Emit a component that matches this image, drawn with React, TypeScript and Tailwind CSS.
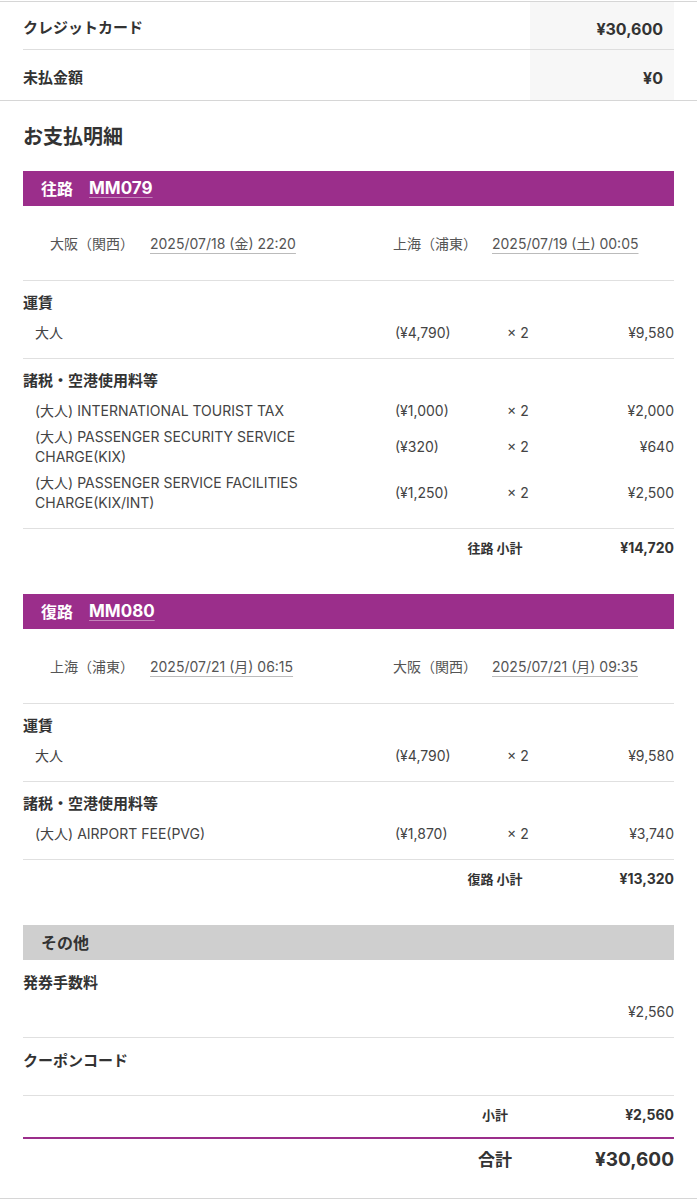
import React from 'react';

type Item = { name: string[]; unit: string; qty: string; amount: string };
type Group = { title: string; items: Item[] };
type Leg = {
  dir: string;
  flight: string;
  from: string;
  fromTime: string;
  to: string;
  toTime: string;
  groups: Group[];
  subtotal: string;
};

const legs: Leg[] = [
  {
    dir: '往路',
    flight: 'MM079',
    from: '大阪（関西）',
    fromTime: '2025/07/18 (金) 22:20',
    to: '上海（浦東）',
    toTime: '2025/07/19 (土) 00:05',
    groups: [
      { title: '運賃', items: [{ name: ['大人'], unit: '(¥4,790)', qty: '× 2', amount: '¥9,580' }] },
      {
        title: '諸税・空港使用料等',
        items: [
          { name: ['(大人) INTERNATIONAL TOURIST TAX'], unit: '(¥1,000)', qty: '× 2', amount: '¥2,000' },
          { name: ['(大人) PASSENGER SECURITY SERVICE', 'CHARGE(KIX)'], unit: '(¥320)', qty: '× 2', amount: '¥640' },
          { name: ['(大人) PASSENGER SERVICE FACILITIES', 'CHARGE(KIX/INT)'], unit: '(¥1,250)', qty: '× 2', amount: '¥2,500' },
        ],
      },
    ],
    subtotal: '¥14,720',
  },
  {
    dir: '復路',
    flight: 'MM080',
    from: '上海（浦東）',
    fromTime: '2025/07/21 (月) 06:15',
    to: '大阪（関西）',
    toTime: '2025/07/21 (月) 09:35',
    groups: [
      { title: '運賃', items: [{ name: ['大人'], unit: '(¥4,790)', qty: '× 2', amount: '¥9,580' }] },
      {
        title: '諸税・空港使用料等',
        items: [{ name: ['(大人) AIRPORT FEE(PVG)'], unit: '(¥1,870)', qty: '× 2', amount: '¥3,740' }],
      },
    ],
    subtotal: '¥13,320',
  },
];

const ItemRow = ({ item }: { item: Item }) => (
  <div className="grid grid-cols-[360px_112px_1fr_1fr] items-center pl-3 text-[14px] leading-[20px] text-[#444]">
    <div>
      {item.name.map((l) => (
        <div key={l}>{l}</div>
      ))}
    </div>
    <div>{item.unit}</div>
    <div>{item.qty}</div>
    <div className="text-right">{item.amount}</div>
  </div>
);

const LegBlock = ({ leg }: { leg: Leg }) => (
  <div className="mb-[28px]">
    <div className="flex h-[35px] items-center bg-[#9b2e8b] pl-[18px] font-bold text-white">
      <span className="text-[16px]">{leg.dir}</span>
      <span className="ml-[16px] text-[17px] underline decoration-white/40 underline-offset-[3px]">{leg.flight}</span>
    </div>

    <div className="flex h-[75px] items-center border-b border-[#e0e0e0] pl-[27px] text-[14px] text-[#555]">
      <div className="flex w-[343px]">
        <span className="w-[100px]">{leg.from}</span>
        <span className="underline decoration-[#bbb] underline-offset-[4px]">{leg.fromTime}</span>
      </div>
      <div className="flex">
        <span className="w-[99px]">{leg.to}</span>
        <span className="underline decoration-[#bbb] underline-offset-[4px]">{leg.toTime}</span>
      </div>
    </div>

    {leg.groups.map((g) => (
      <div key={g.title} className="border-b border-[#e0e0e0] pt-[11px] pb-[15px]">
        <div className="text-[15px] leading-[22px] font-bold text-[#333]">{g.title}</div>
        <div className="mt-[9px] flex flex-col gap-[6px]">
          {g.items.map((it) => (
            <ItemRow key={it.name.join()} item={it} />
          ))}
        </div>
      </div>
    ))}

    <div className="grid grid-cols-[1fr_88px_135px] items-center pt-[9px] pb-[8px] leading-[20px] font-bold text-[#333]">
      <div />
      <div className="text-center text-[13px]">{leg.dir} 小計</div>
      <div className="text-right text-[14px]">{leg.subtotal}</div>
    </div>
  </div>
);

export default function App() {
  return (
    <div className="min-h-[1200px] bg-white font-['Inter','Noto_Sans_CJK_JP',sans-serif] text-[#333]">
      {/* payment summary */}
      <div className="mt-px border-t border-b border-[#d6d6d6] px-[23px]">
        <div className="flex h-[48px] items-stretch border-b border-[#dedede]">
          <div className="flex flex-1 items-center pt-[6px] text-[15px] font-bold">クレジットカード</div>
          <div className="flex w-[144px] items-center justify-end bg-[#f7f7f7] pt-[6px] pr-[11px] text-[16px] font-bold">¥30,600</div>
        </div>
        <div className="flex h-[50px] items-stretch">
          <div className="flex flex-1 items-center pt-[6px] text-[15px] font-bold">未払金額</div>
          <div className="flex w-[144px] items-center justify-end bg-[#f7f7f7] pt-[6px] pr-[11px] text-[16px] font-bold">¥0</div>
        </div>
      </div>

      <div className="border-b border-[#d6d6d6] px-[23px] pt-[22px]">
        <h2 className="mb-[20px] text-[20px] leading-[28px] font-bold text-[#333]">お支払明細</h2>

        {legs.map((leg) => (
          <LegBlock key={leg.flight} leg={leg} />
        ))}

        {/* other */}
        <div className="flex h-[35px] items-center bg-[#cfcfcf] pl-[18px] text-[16px] font-bold text-[#333]">その他</div>

        <div className="border-b border-[#e0e0e0] pt-[12px] pb-[15px]">
          <div className="text-[15px] leading-[22px] font-bold">発券手数料</div>
          <div className="mt-[8px] text-right text-[14px] leading-[20px] text-[#444]">¥2,560</div>
        </div>

        <div className="border-b border-[#e0e0e0] pt-[12px] pb-[23px]">
          <div className="text-[15px] leading-[22px] font-bold">クーポンコード</div>
        </div>

        <div className="grid grid-cols-[1fr_88px_135px] items-center border-b-2 border-[#9b2e8b] pt-[9px] pb-[12px] leading-[20px] font-bold">
          <div />
          <div className="text-center text-[13px]">小計</div>
          <div className="text-right text-[14px]">¥2,560</div>
        </div>

        <div className="grid grid-cols-[1fr_88px_135px] items-center pt-[9px] pb-[26px] font-bold">
          <div />
          <div className="text-center text-[17px] leading-[24px]">合計</div>
          <div className="text-right text-[19px] leading-[24px]">¥30,600</div>
        </div>
      </div>
    </div>
  );
}
